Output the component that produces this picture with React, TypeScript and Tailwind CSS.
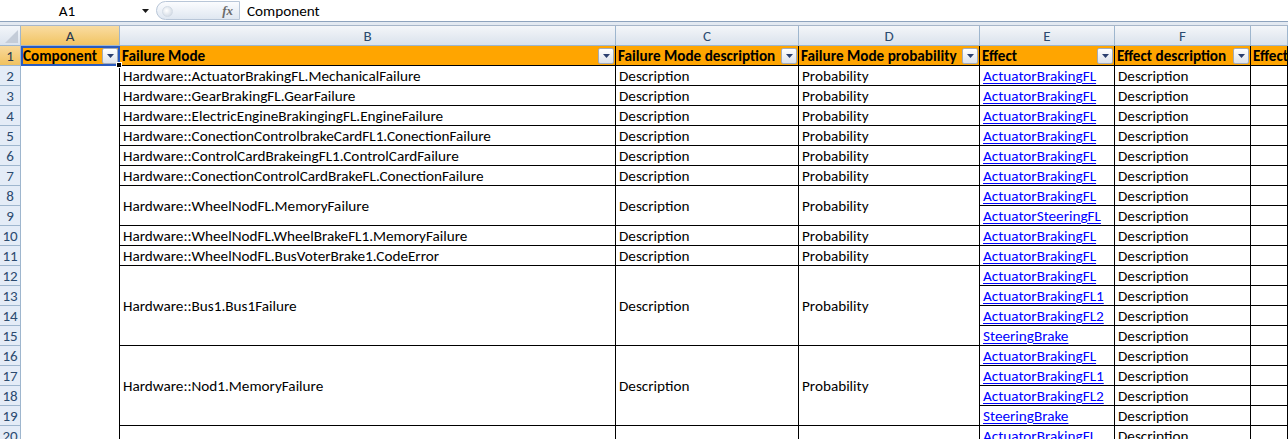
import type { ReactNode } from "react";

const FONT = "font-['Calibri','Carlito','Lato','Liberation_Sans',sans-serif]";

const COLS = ["A", "B", "C", "D", "E", "F", "G"];

type Group = { start: number; mode?: string; effects: string[] };

const GROUPS: Group[] = [
  { start: 2, mode: "Hardware::ActuatorBrakingFL.MechanicalFailure", effects: ["ActuatorBrakingFL"] },
  { start: 3, mode: "Hardware::GearBrakingFL.GearFailure", effects: ["ActuatorBrakingFL"] },
  { start: 4, mode: "Hardware::ElectricEngineBrakingingFL.EngineFailure", effects: ["ActuatorBrakingFL"] },
  { start: 5, mode: "Hardware::ConectionControlbrakeCardFL1.ConectionFailure", effects: ["ActuatorBrakingFL"] },
  { start: 6, mode: "Hardware::ControlCardBrakeingFL1.ControlCardFailure", effects: ["ActuatorBrakingFL"] },
  { start: 7, mode: "Hardware::ConectionControlCardBrakeFL.ConectionFailure", effects: ["ActuatorBrakingFL"] },
  { start: 8, mode: "Hardware::WheelNodFL.MemoryFailure", effects: ["ActuatorBrakingFL", "ActuatorSteeringFL"] },
  { start: 10, mode: "Hardware::WheelNodFL.WheelBrakeFL1.MemoryFailure", effects: ["ActuatorBrakingFL"] },
  { start: 11, mode: "Hardware::WheelNodFL.BusVoterBrake1.CodeError", effects: ["ActuatorBrakingFL"] },
  {
    start: 12,
    mode: "Hardware::Bus1.Bus1Failure",
    effects: ["ActuatorBrakingFL", "ActuatorBrakingFL1", "ActuatorBrakingFL2", "SteeringBrake"],
  },
  {
    start: 16,
    mode: "Hardware::Nod1.MemoryFailure",
    effects: ["ActuatorBrakingFL", "ActuatorBrakingFL1", "ActuatorBrakingFL2", "SteeringBrake"],
  },
  { start: 20, effects: ["ActuatorBrakingFL", "ActuatorBrakingFL1", "ActuatorBrakingFL2", "SteeringBrake"] },
];

const SPAN: Record<number, string> = { 1: "", 2: "row-span-2", 4: "row-span-4" };

function FilterButton() {
  return (
    <span className="ml-auto mr-[1px] flex h-[16px] w-[16px] shrink-0 items-center justify-center rounded-[2px] border border-[#a3abb8] bg-[linear-gradient(#ffffff,#dde2ea)]">
      <svg width="7" height="4" viewBox="0 0 7 4">
        <path d="M0 0h7L3.5 4z" fill="#2b3f6e" />
      </svg>
    </span>
  );
}

function HeadCell({ label, first, last }: { label: string; first?: boolean; last?: boolean }) {
  return (
    <div
      className={`relative flex items-center gap-1 overflow-hidden whitespace-nowrap border-b border-r border-black bg-[#ffa500] pl-[2px] text-[15.2px] font-bold text-black ${
        first ? "overflow-visible outline outline-2 -outline-offset-2 outline-[#2a5bbf]" : ""
      }`}
    >
      <span className="pt-[2px]">{label}</span>
      {!last && <FilterButton />}
      {first && (
        <span className="absolute bottom-[-3px] right-[-3px] z-10 h-[6px] w-[6px] border border-white bg-black" />
      )}
    </div>
  );
}

function RowNum({ n, selected }: { n: number; selected?: boolean }) {
  return (
    <div
      className={`flex items-center justify-center border-b border-r border-[#9eb6ce] pt-[2px] text-[15px] ${
        selected
          ? "bg-[linear-gradient(#f8d99c,#f1c260)] text-[#2b3a4f]"
          : "bg-[#e4ecf7] text-[#2b4a6f]"
      }`}
    >
      {n}
    </div>
  );
}

function Cell({ children, className = "" }: { children?: ReactNode; className?: string }) {
  return (
    <div
      className={`flex items-center overflow-hidden whitespace-nowrap border-b border-r border-black bg-white pl-[3px] pt-[2px] text-[15.2px] text-black ${className}`}
    >
      {children}
    </div>
  );
}

function Link({ text }: { text: string }) {
  return <span className="text-[#0000ff] underline underline-offset-2">{text}</span>;
}

function FormulaBar() {
  return (
    <div className="flex h-[22px] items-stretch border-b border-[#8ea3bd] bg-white">
      <div className="relative flex w-[156px] items-center justify-center pt-[2px] text-[15.2px] text-black">
        <span className="pr-[22px]">A1</span>
        <svg className="absolute right-[7px] top-[9px]" width="7" height="4" viewBox="0 0 7 4">
          <path d="M0 0h7L3.5 4z" fill="#1a1a1a" />
        </svg>
      </div>
      <div className="relative my-[1px] flex w-[84px] items-center justify-end rounded-l-full border border-[#b8c6d8] bg-[linear-gradient(#fbfcfe,#dfe7f1)] pr-[6px]">
        <span className="absolute left-[5px] top-[4px] h-[11px] w-[11px] rounded-full border border-[#d3dbe5] bg-[radial-gradient(circle_at_40%_40%,#ffffff,#c9d3df)]" />
        <span className="font-['Liberation_Serif',serif] text-[13px] font-bold italic text-[#6b6b6b]">fx</span>
      </div>
      <div className="flex flex-1 items-center pl-[7px] pt-[2px] text-[15.2px] text-black">Component</div>
    </div>
  );
}

export default function App() {
  const cells: ReactNode[] = [];

  // column letters
  cells.push(
    <div key="corner" className="relative border-b border-r border-[#9eb6ce] bg-[linear-gradient(#f3f6fa,#dbe3ee)]">
      <svg className="absolute bottom-[2px] right-[2px]" width="13" height="13" viewBox="0 0 13 13">
        <path d="M13 0v13H0z" fill="#c4ccd8" />
      </svg>
    </div>
  );
  COLS.forEach((c, i) => {
    cells.push(
      <div
        key={`col-${c}`}
        className={`flex items-center justify-center border-b border-r border-[#9eb6ce] pt-[2px] text-[15px] ${
          i === 0
            ? "bg-[linear-gradient(#f9dca2,#f1c463)] text-[#2b3a4f]"
            : "bg-[linear-gradient(#f4f6f9,#dae2ec)] text-[#2b4a6f]"
        }`}
      >
        {i === 6 ? "" : c}
      </div>
    );
  });

  // header row 1
  cells.push(<RowNum key="r1" n={1} selected />);
  ["Component", "Failure Mode", "Failure Mode description", "Failure Mode probability", "Effect", "Effect description", "Effect"].forEach(
    (h, i) => cells.push(<HeadCell key={`h-${i}`} label={h} first={i === 0} last={i === 6} />)
  );

  GROUPS.forEach((g) => {
    const span = SPAN[g.effects.length];
    g.effects.forEach((eff, k) => {
      const r = g.start + k;
      cells.push(<RowNum key={`rn-${r}`} n={r} />);
      cells.push(<div key={`a-${r}`} className="border-r border-black bg-white" />);
      if (k === 0) {
        cells.push(
          <Cell key={`b-${r}`} className={span}>
            {g.mode ?? ""}
          </Cell>
        );
        cells.push(
          <Cell key={`c-${r}`} className={span}>
            {g.mode ? "Description" : ""}
          </Cell>
        );
        cells.push(
          <Cell key={`d-${r}`} className={span}>
            {g.mode ? "Probability" : ""}
          </Cell>
        );
      }
      cells.push(
        <Cell key={`e-${r}`}>
          <Link text={eff} />
        </Cell>
      );
      cells.push(<Cell key={`f-${r}`}>Description</Cell>);
      cells.push(<Cell key={`g-${r}`} />);
    });
  });

  return (
    <div className={`h-[439px] w-[1288px] overflow-hidden bg-white leading-none ${FONT}`}>
      <FormulaBar />
      <div className="h-[4px] border-b border-[#a7b6c9] bg-[#e3e9f1]" />
      <div className="grid auto-rows-[20px] grid-cols-[21px_99px_496px_183px_181px_135px_136px_37px]">
        {cells}
      </div>
    </div>
  );
}
